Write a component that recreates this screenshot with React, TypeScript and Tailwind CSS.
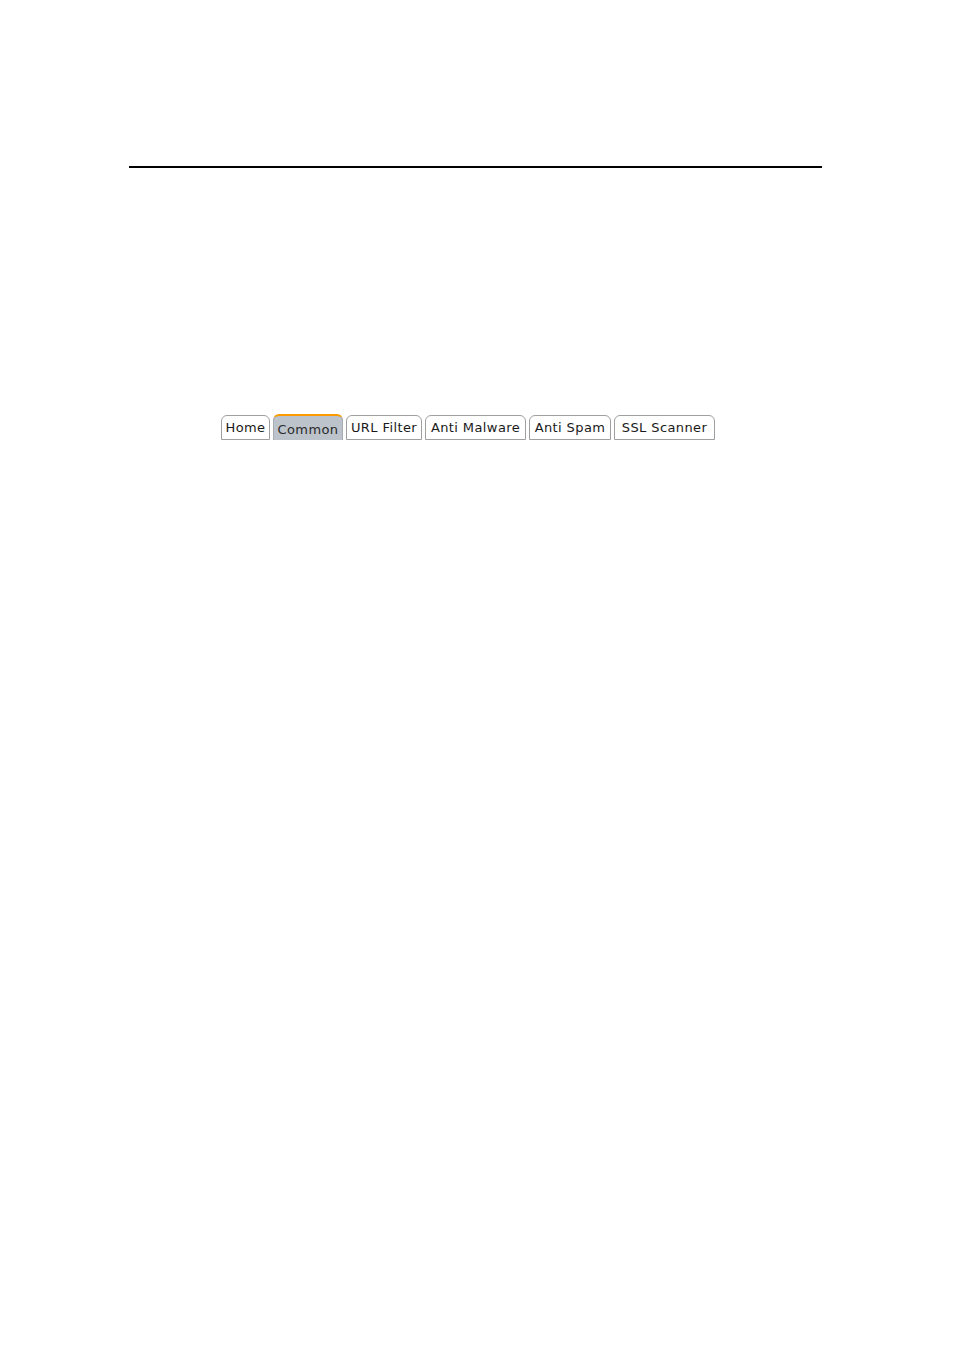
const tabs = [
  { label: "Home", w: "w-[49px]" },
  { label: "Common", w: "w-[70px]", active: true },
  { label: "URL Filter", w: "w-[76px]" },
  { label: "Anti Malware", w: "w-[101px]" },
  { label: "Anti Spam", w: "w-[82px]" },
  { label: "SSL Scanner", w: "w-[101px]" },
];

export default function App() {
  return (
    <div className="min-h-[1350px] w-[954px] bg-white font-['DejaVu_Sans',sans-serif]">
      {/* header rule */}
      <div className="pt-[166px] pl-[129px]">
        <div className="h-[2px] w-[693px] bg-black" />
      </div>

      {/* tab bar */}
      <div className="flex gap-[3px] pt-[247px] pl-[221px]">
        {tabs.map((t) =>
          t.active ? (
            <div
              key={t.label}
              className={`${t.w} mt-[-1px] flex h-[26px] items-center justify-center rounded-t-[6px] border-x border-t-2 border-x-[#a8acb2] border-t-[#ff9900] bg-[#bcc3cb] pt-[2px] text-[13px] leading-none tracking-[0.4px] text-[#2a2a2a]`}
            >
              {t.label}
            </div>
          ) : (
            <div
              key={t.label}
              className={`${t.w} flex h-[25px] items-center justify-center rounded-t-[6px] border border-[#a0a0a0] bg-white text-[13px] leading-none tracking-[0.4px] text-[#1a1a1a]`}
            >
              {t.label}
            </div>
          )
        )}
      </div>
    </div>
  );
}
